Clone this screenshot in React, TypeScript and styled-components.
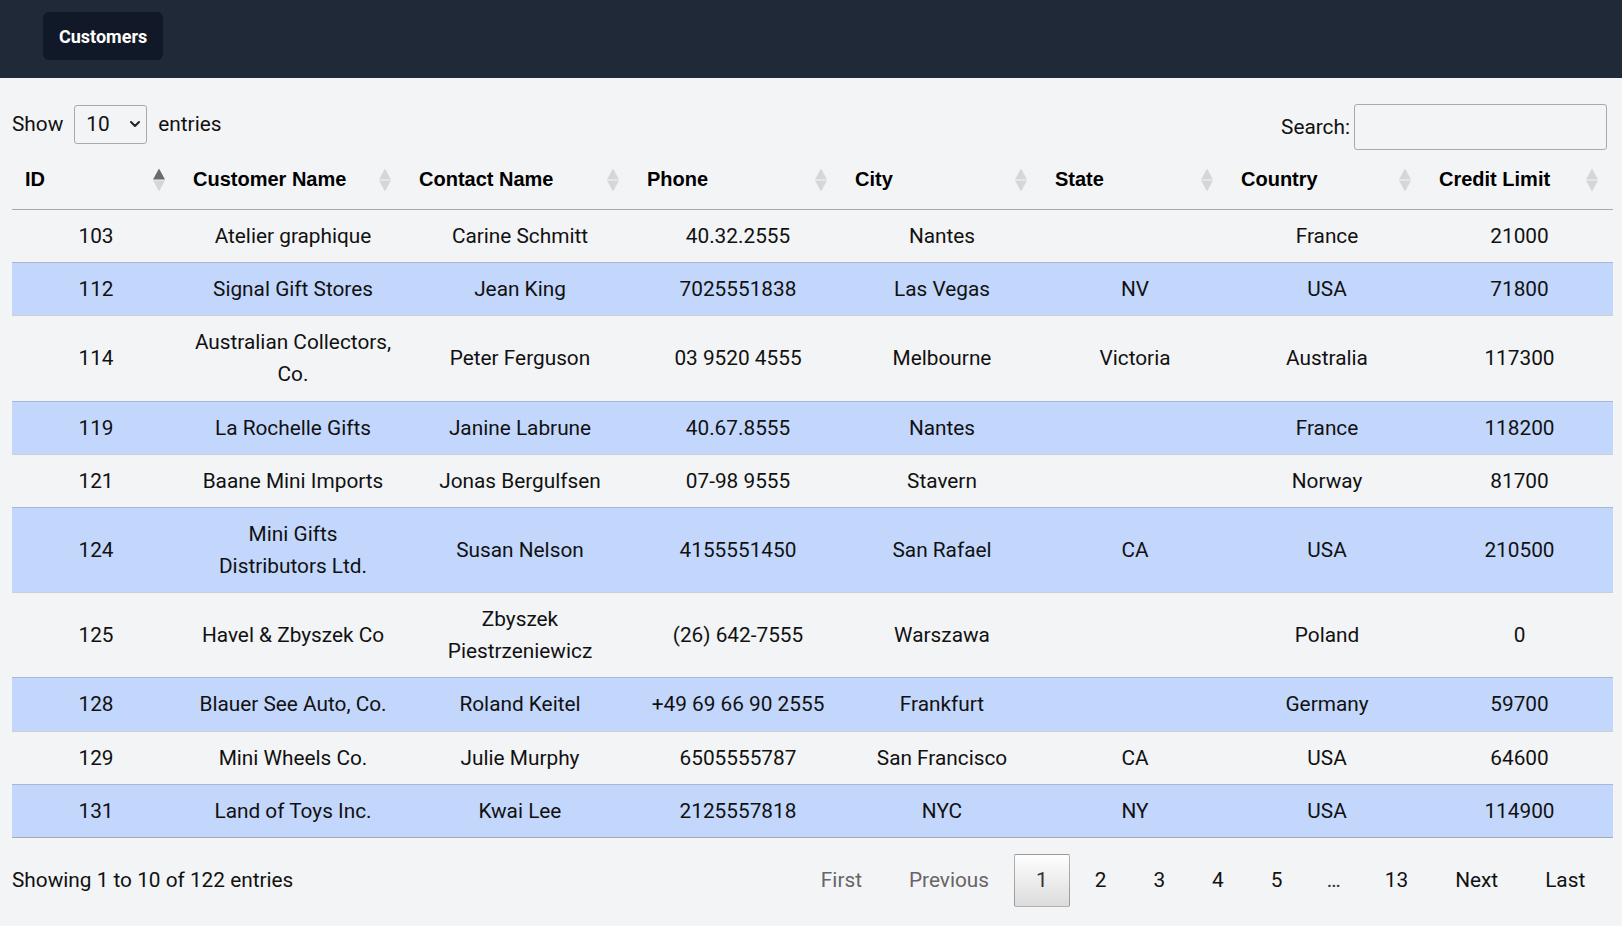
import React from "react";
import styled, { createGlobalStyle } from "styled-components";
import { ChevronDown } from "lucide-react";

const GlobalStyle = createGlobalStyle`
  html, body {
    margin: 0;
    padding: 0;
    background: #f3f4f6;
  }
  body {
    font-family: Roboto, "Noto Sans", Arial, sans-serif;
    color: #111;
  }
  * { box-sizing: border-box; }
`;

const TopBar = styled.header`
  height: 78px;
  background: #1f2937;
  padding: 12px 43px 0;
  display: flex;
  align-items: flex-start;
`;

const NavButton = styled.button`
  height: 48px;
  padding: 0 16px;
  border: none;
  border-radius: 6px;
  background: #111827;
  color: #fff;
  font-family: Roboto, Arial, sans-serif;
  font-size: 18px;
  font-weight: 700;
  cursor: pointer;
`;

const Main = styled.main`
  padding: 26px 9px 0 12px;
`;

const Controls = styled.div`
  display: flex;
  justify-content: space-between;
  align-items: flex-start;
  padding-right: 6px;
  font-size: 20.8px;
`;

const LengthLabel = styled.label`
  display: flex;
  align-items: center;
  gap: 11px;
  height: 40px;
  line-height: 40px;
`;

const SelectWrap = styled.span`
  position: relative;
  display: inline-flex;
`;

const Select = styled.select`
  appearance: none;
  -webkit-appearance: none;
  width: 73px;
  height: 39px;
  padding: 0 0 0 11px;
  border: 1px solid #aaa;
  border-radius: 3px;
  background: transparent;
  font-family: Roboto, Arial, sans-serif;
  font-size: 20.8px;
  color: #111;
`;

const Chevron = styled(ChevronDown)`
  position: absolute;
  right: 4px;
  top: 50%;
  transform: translateY(-50%);
  pointer-events: none;
`;

const SearchLabel = styled.label`
  display: flex;
  align-items: center;
  gap: 4px;
`;

const SearchInput = styled.input`
  width: 253px;
  height: 46px;
  border: 1px solid #aaa;
  border-radius: 3px;
  background: transparent;
  font-family: Roboto, Arial, sans-serif;
  font-size: 20.8px;
  padding: 4px 8px;
`;

const Table = styled.table`
  width: 100%;
  table-layout: fixed;
  border-collapse: separate;
  border-spacing: 0;
  border-bottom: 1px solid rgba(0, 0, 0, 0.3);
`;

const Th = styled.th`
  position: relative;
  text-align: left;
  padding: 13px 30px 13px 13px;
  font-family: "Liberation Sans", Arial, sans-serif;
  font-size: 20px;
  font-weight: 700;
  line-height: 33px;
  color: #000;
  border-bottom: 1px solid rgba(0, 0, 0, 0.3);
  cursor: pointer;
  white-space: nowrap;
`;

const SortIcon = styled.svg`
  position: absolute;
  right: 15px;
  top: 50%;
  transform: translateY(-50%);
`;

const Row = styled.tr<{ $striped: boolean }>`
  background: ${(p) => (p.$striped ? "#c3d7fd" : "transparent")};
  &:first-child td {
    border-top: none;
  }
`;

const Td = styled.td`
  padding: 10.1px 14px;
  text-align: center;
  font-size: 20.8px;
  line-height: 32px;
  color: #111;
  border-top: 1px solid rgba(0, 0, 0, 0.15);
`;

const Footer = styled.div`
  display: flex;
  justify-content: space-between;
  align-items: center;
  margin-top: 16px;
  padding-right: 6px;
  font-size: 20.8px;
`;

const Info = styled.div`
  line-height: 32px;
`;

const Pager = styled.div`
  display: flex;
  align-items: center;
  gap: 3.4px;
`;

const PageButton = styled.span<{ $active?: boolean; $disabled?: boolean }>`
  display: inline-block;
  padding: 10.4px 20.8px;
  line-height: 30px;
  border: 1px solid ${(p) => (p.$active ? "rgba(0,0,0,0.3)" : "transparent")};
  border-radius: 2px;
  background: ${(p) =>
    p.$active ? "linear-gradient(to bottom, #fefefe 0%, #dcdcdc 100%)" : "transparent"};
  color: ${(p) => (p.$disabled ? "#666" : p.$active ? "#333" : "#111")};
  cursor: ${(p) => (p.$disabled ? "default" : "pointer")};
`;

const Ellipsis = styled.span`
  padding: 0 19px;
  line-height: 30px;
  color: #333;
`;

type Customer = {
  id: number;
  name: string;
  contact: string;
  phone: string;
  city: string;
  state: string;
  country: string;
  credit: number;
};

const customers: Customer[] = [
  { id: 103, name: "Atelier graphique", contact: "Carine Schmitt", phone: "40.32.2555", city: "Nantes", state: "", country: "France", credit: 21000 },
  { id: 112, name: "Signal Gift Stores", contact: "Jean King", phone: "7025551838", city: "Las Vegas", state: "NV", country: "USA", credit: 71800 },
  { id: 114, name: "Australian Collectors, Co.", contact: "Peter Ferguson", phone: "03 9520 4555", city: "Melbourne", state: "Victoria", country: "Australia", credit: 117300 },
  { id: 119, name: "La Rochelle Gifts", contact: "Janine Labrune", phone: "40.67.8555", city: "Nantes", state: "", country: "France", credit: 118200 },
  { id: 121, name: "Baane Mini Imports", contact: "Jonas Bergulfsen", phone: "07-98 9555", city: "Stavern", state: "", country: "Norway", credit: 81700 },
  { id: 124, name: "Mini Gifts Distributors Ltd.", contact: "Susan Nelson", phone: "4155551450", city: "San Rafael", state: "CA", country: "USA", credit: 210500 },
  { id: 125, name: "Havel & Zbyszek Co", contact: "Zbyszek Piestrzeniewicz", phone: "(26) 642-7555", city: "Warszawa", state: "", country: "Poland", credit: 0 },
  { id: 128, name: "Blauer See Auto, Co.", contact: "Roland Keitel", phone: "+49 69 66 90 2555", city: "Frankfurt", state: "", country: "Germany", credit: 59700 },
  { id: 129, name: "Mini Wheels Co.", contact: "Julie Murphy", phone: "6505555787", city: "San Francisco", state: "CA", country: "USA", credit: 64600 },
  { id: 131, name: "Land of Toys Inc.", contact: "Kwai Lee", phone: "2125557818", city: "NYC", state: "NY", country: "USA", credit: 114900 },
];

const columns: { label: string; width: number }[] = [
  { label: "ID", width: 168 },
  { label: "Customer Name", width: 226 },
  { label: "Contact Name", width: 228 },
  { label: "Phone", width: 208 },
  { label: "City", width: 200 },
  { label: "State", width: 186 },
  { label: "Country", width: 198 },
  { label: "Credit Limit", width: 187 },
];

function Sort({ active }: { active?: boolean }) {
  return (
    <SortIcon width="12" height="23" viewBox="0 0 12 23" aria-hidden="true">
      <polygon points="0,11 6,0 12,11" fill={active ? "#6b6b6b" : "#d6d6d6"} />
      <polygon points="0,12 6,23 12,12" fill="#d6d6d6" />
    </SortIcon>
  );
}

export default function App() {
  return (
    <>
      <GlobalStyle />
      <TopBar>
        <NavButton>Customers</NavButton>
      </TopBar>
      <Main>
        <Controls>
          <LengthLabel>
            Show
            <SelectWrap>
              <Select defaultValue="10">
                <option value="10">10</option>
                <option value="25">25</option>
                <option value="50">50</option>
                <option value="100">100</option>
              </Select>
              <Chevron size={16} strokeWidth={3} color="#222" />
            </SelectWrap>
            entries
          </LengthLabel>
          <SearchLabel>
            Search:
            <SearchInput type="search" />
          </SearchLabel>
        </Controls>
        <Table>
          <colgroup>
            {columns.map((c) => (
              <col key={c.label} style={{ width: c.width }} />
            ))}
          </colgroup>
          <thead>
            <tr>
              {columns.map((c, i) => (
                <Th key={c.label}>
                  {c.label}
                  <Sort active={i === 0} />
                </Th>
              ))}
            </tr>
          </thead>
          <tbody>
            {customers.map((c, i) => (
              <Row key={c.id} $striped={i % 2 === 1}>
                <Td>{c.id}</Td>
                <Td>{c.name}</Td>
                <Td>{c.contact}</Td>
                <Td>{c.phone}</Td>
                <Td>{c.city}</Td>
                <Td>{c.state}</Td>
                <Td>{c.country}</Td>
                <Td>{c.credit}</Td>
              </Row>
            ))}
          </tbody>
        </Table>
        <Footer>
          <Info>Showing 1 to 10 of 122 entries</Info>
          <Pager>
            <PageButton $disabled>First</PageButton>
            <PageButton $disabled>Previous</PageButton>
            <PageButton $active>1</PageButton>
            <PageButton>2</PageButton>
            <PageButton>3</PageButton>
            <PageButton>4</PageButton>
            <PageButton>5</PageButton>
            <Ellipsis>…</Ellipsis>
            <PageButton>13</PageButton>
            <PageButton>Next</PageButton>
            <PageButton>Last</PageButton>
          </Pager>
        </Footer>
      </Main>
    </>
  );
}
